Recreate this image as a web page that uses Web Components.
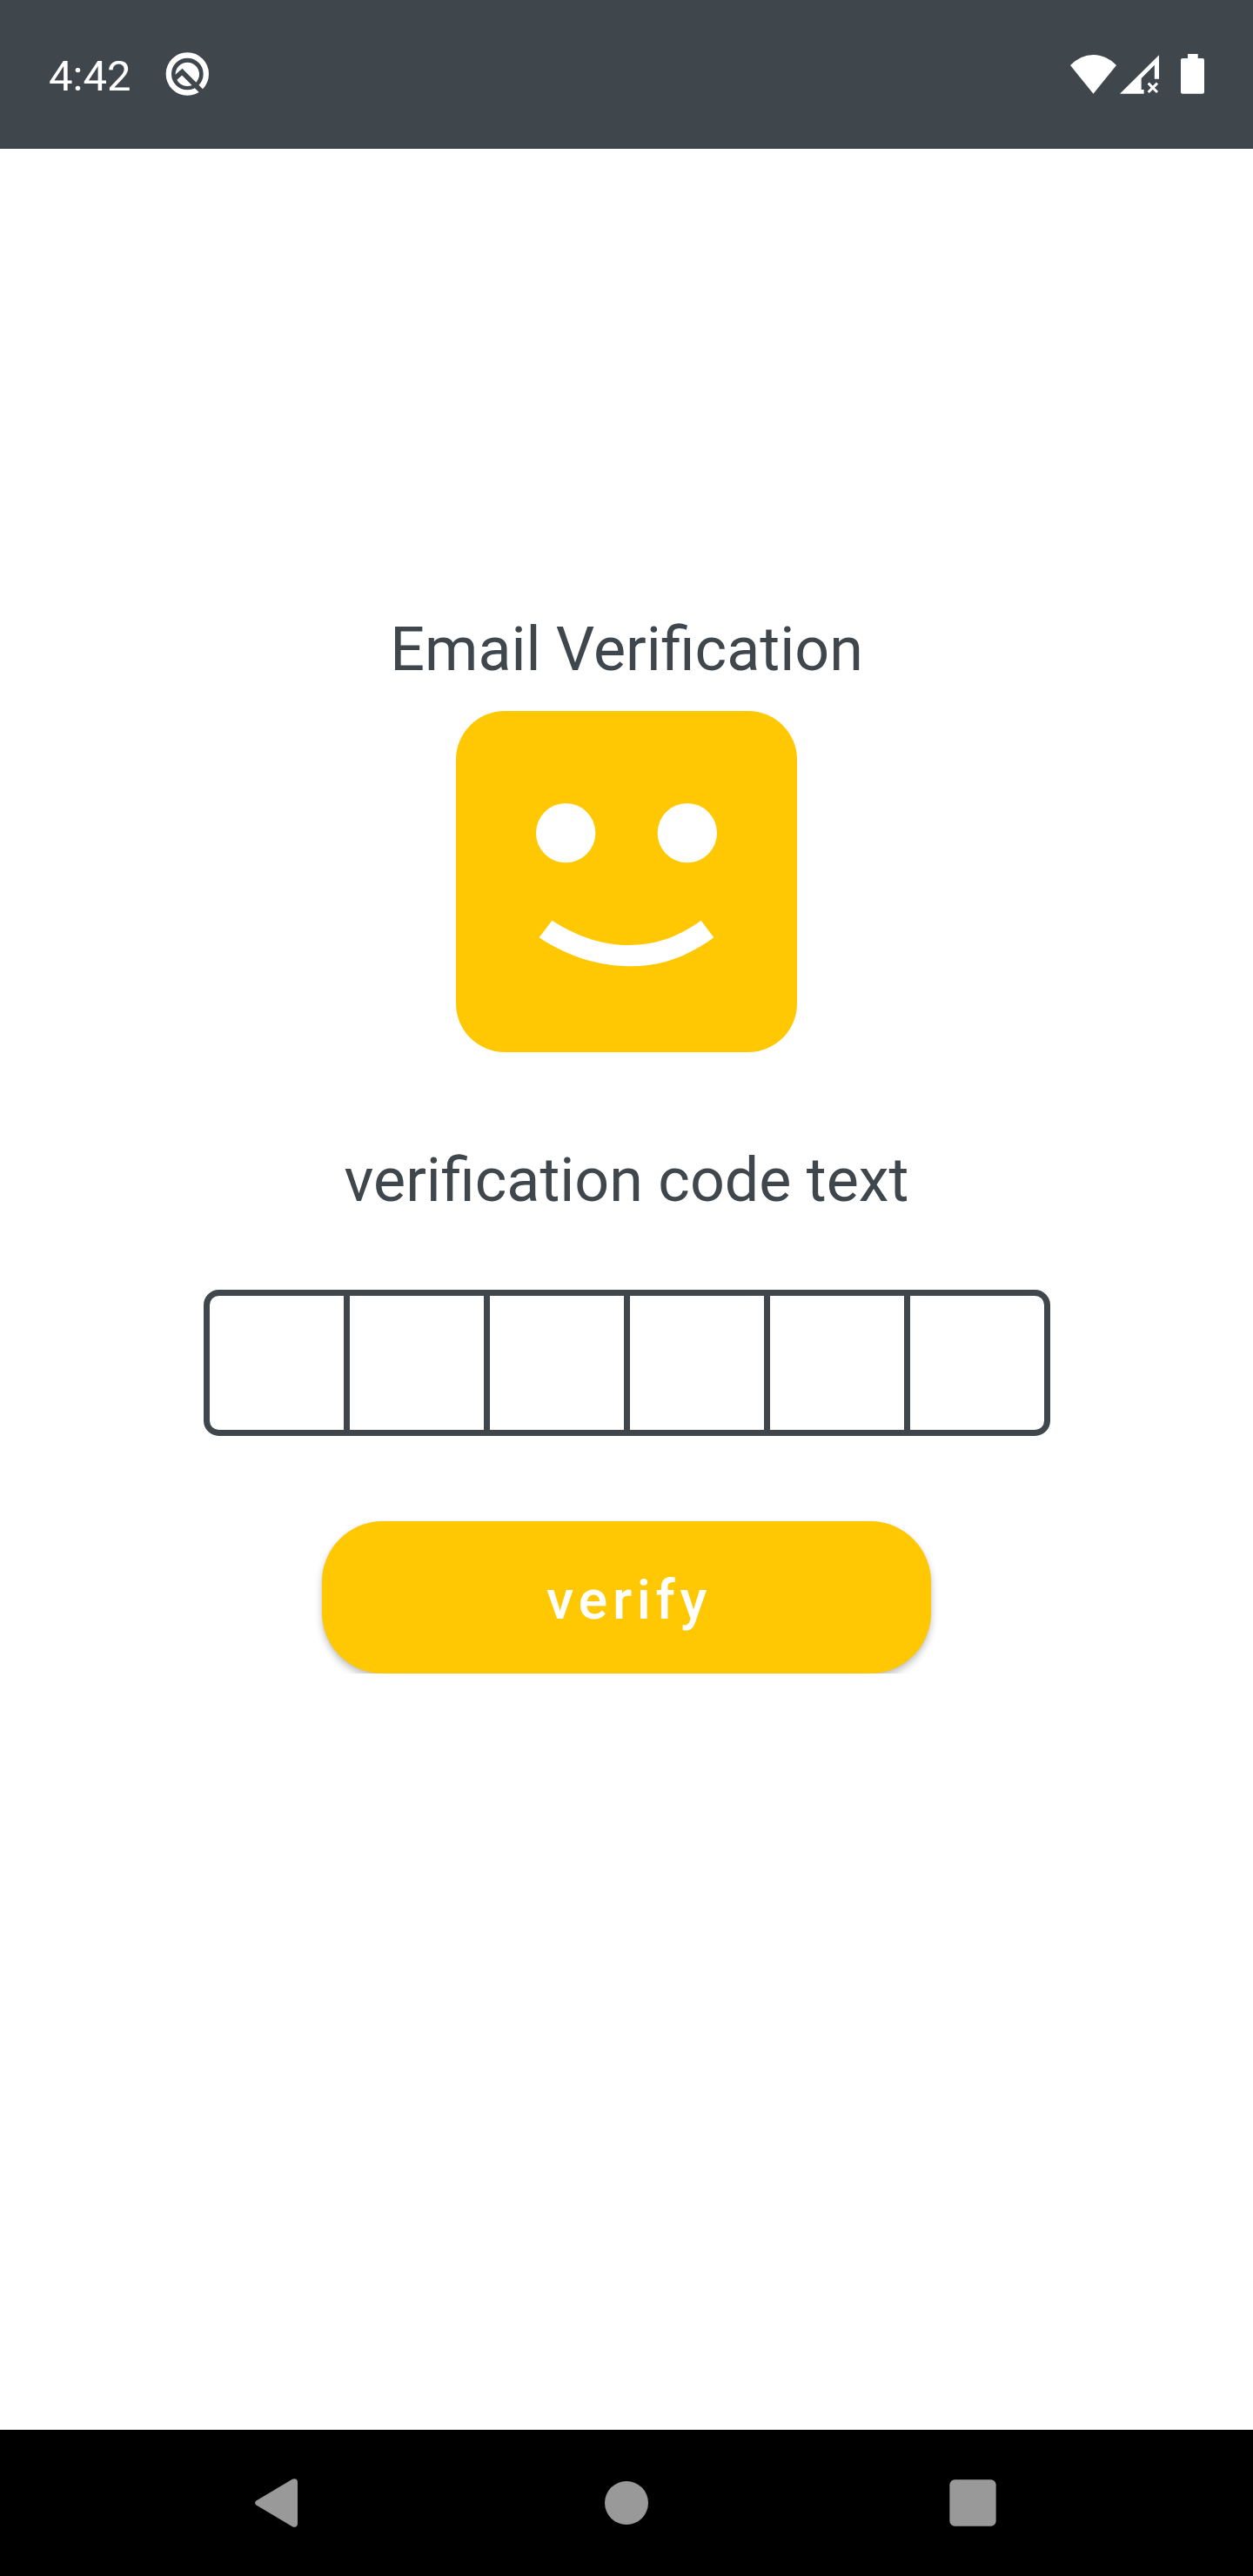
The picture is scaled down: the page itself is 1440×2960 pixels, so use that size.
<!DOCTYPE html>
<html lang="en">
<head>
<meta charset="utf-8">
<title>Email Verification</title>
<style>
  html, body { margin: 0; padding: 0; background: #fff; }
  body { width: 1440px; height: 2960px; overflow: hidden; font-family: Roboto, "Liberation Sans", sans-serif; color: #3f474d; --ink: #3f474d; --accent: #ffc803; }
</style>
</head>
<body>
<phone-screen>
  <status-bar slot="top">4:42</status-bar>
  <screen-label>Email Verification</screen-label>
  <smiley-logo></smiley-logo>
  <screen-label class="prompt">verification code text</screen-label>
  <code-input length="6"></code-input>
  <verify-button>verify</verify-button>
  <nav-bar slot="bottom"></nav-bar>
</phone-screen>
<script>
const define = (name, html, setup) => customElements.define(name, class extends HTMLElement {
  constructor() {
    super();
    this.attachShadow({ mode: 'open' }).innerHTML = html;
  }
  connectedCallback() { if (setup) setup(this, this.shadowRoot); }
});

define('phone-screen', `
  <style>
    :host { display: flex; flex-direction: column; width: 1440px; height: 2960px; background: #fff; }
    main { flex: 1; display: flex; flex-direction: column; align-items: center; padding-top: 534px; }
    ::slotted(smiley-logo) { margin-top: 30px; }
    ::slotted(.prompt) { margin-top: 106px; }
    ::slotted(code-input) { margin-top: 85px; margin-left: 1px; }
    ::slotted(verify-button) { margin-top: 98px; }
  </style>
  <slot name="top"></slot><main><slot></slot></main><slot name="bottom"></slot>`);

define('status-bar', `
  <style>
    :host { display: flex; align-items: flex-start; box-sizing: border-box; height: 171px; padding: 0 56px; background: var(--ink); color: #fff; }
    .time { font-size: 49px; line-height: 57px; margin-top: 59px; width: 134px; white-space: nowrap; }
    svg { display: block; flex: none; fill: #fff; }
    .q { margin-top: 59px; }
    .icons { margin-left: auto; display: flex; margin-top: 62px; }
    .signal { margin-left: 4px; }
    .battery { margin-left: 25px; }
    .gap { stroke: var(--ink); }
  </style>
  <span class="time"><slot></slot></span>
  <svg class="q" width="52" height="52" viewBox="480 57 156 156">
    <circle cx="556" cy="135" r="64.5" fill="none" stroke="#fff" stroke-width="19"/>
    <circle cx="556" cy="136" r="41"/>
    <path class="gap" d="M511 152 L538 128 L617 207" fill="none" stroke-width="17"/>
  </svg>
  <div class="icons">
    <svg width="53" height="46" viewBox="60 66 159 138"><path d="M60 105 Q96 69 139.500 69 Q183 69 219 105 L139.500 203 Z"/></svg>
    <svg class="signal" width="45" height="46" viewBox="231 66 135 138">
      <path d="M231 203.500 L366 70 V152 H350.500 V104 L305 150 V189 H314 V203.500 Z"/>
      <path d="M329 167 L360 198 M360 167 L329 198" stroke="#fff" stroke-width="9" fill="none"/>
    </svg>
    <svg class="battery" width="27" height="46" viewBox="441 66 81 138"><path d="M465 66 H500 V81 H516 Q522 81 522 87 V197 Q522 203 516 203 H447 Q441 203 441 197 V87 Q441 81 447 81 H465 Z"/></svg>
  </div>`);

define('screen-label', `
  <style>:host { display: block; font-size: 70px; line-height: 82px; white-space: nowrap; }</style>
  <slot></slot>`);

define('smiley-logo', `
  <style>
    :host { display: block; width: 392px; height: 392px; border-radius: 56px; background: var(--accent); }
    svg { display: block; fill: #fff; }
  </style>
  <svg width="392" height="392" viewBox="0 0 1176 1176">
    <circle cx="378.500" cy="420.500" r="102.500"/>
    <circle cx="797.500" cy="420.500" r="102.500"/>
    <path d="M287 781 L331 722 C425 782 512 807 598 807 C678 807 757 785 845 722 L889 781 C793 851 702 880 605 880 C498 880 390 850 287 781 Z"/>
  </svg>`);

define('code-input', `
  <style>
    :host { display: flex; box-sizing: border-box; width: 973px; height: 168px; border: 7px solid var(--ink); border-radius: 17.5px; }
    span { width: 154px; }
    span + span { border-left: 7px solid var(--ink); }
  </style>`, (el, root) => {
    for (let i = 0; i < Number(el.getAttribute('length')); i++) root.append(document.createElement('span'));
  });

define('verify-button', `
  <style>
    :host { display: block; clip-path: inset(-20px -20px 0 -20px); }
    button { display: flex; align-items: center; justify-content: center; box-sizing: border-box; width: 700px; height: 175px; border: 0; border-radius: 70px; padding: 6px 0 0 6px; background: var(--accent); color: #fff; font: 500 63px/74px Roboto, sans-serif; letter-spacing: 5.63px; box-shadow: 0 5px 8px rgba(0,0,0,.24), 0 0 3px rgba(0,0,0,.06); }
  </style>
  <button type="button"><slot></slot></button>`);

define('nav-bar', `
  <style>
    :host { display: flex; align-items: center; box-sizing: border-box; height: 168px; padding-left: 293px; background: #000; }
    svg { display: block; flex: none; fill: #999; }
    .home { margin: 0 346px 0 352px; }
  </style>
  <svg width="50" height="56" viewBox="0 0 50 56"><path d="M1.500 25.500 L43 .8 Q45 -.5 47.500 .8 Q49 2 49 4 V52 Q49 54 47.500 55.200 Q45 56.500 43 55.200 L1.500 30.500 Q-1.300 28 1.500 25.500 Z"/></svg>
  <svg class="home" width="50" height="50" viewBox="0 0 50 50"><circle cx="25" cy="25" r="25"/></svg>
  <svg width="54" height="54" viewBox="0 0 54 54"><rect x=".35" y=".35" width="53.300" height="53.300" rx="6"/></svg>`);
</script>
</body>
</html>
